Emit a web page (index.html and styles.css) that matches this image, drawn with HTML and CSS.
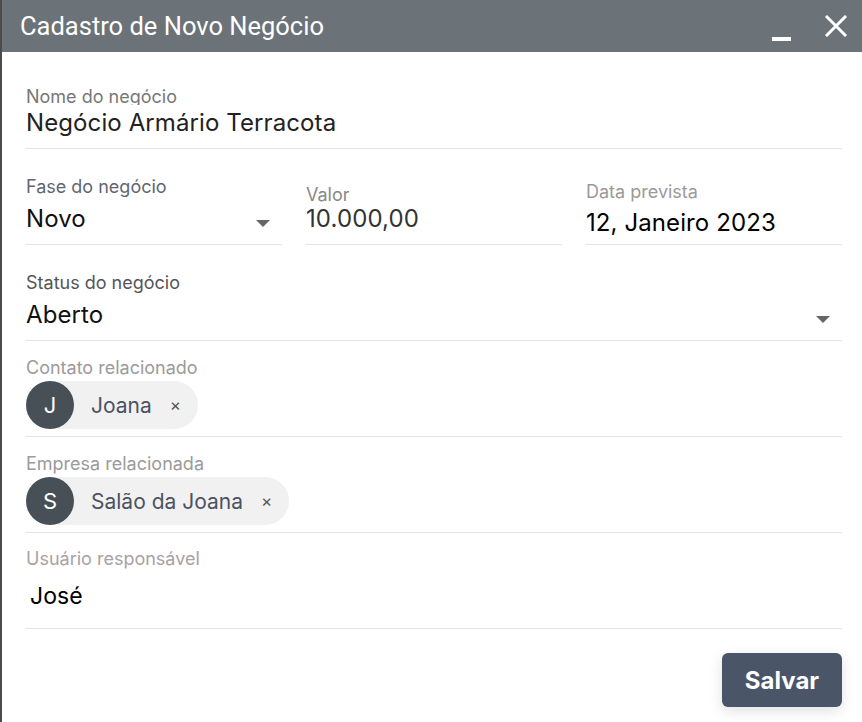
FILE: index.html
```html
<!DOCTYPE html>
<html lang="pt-BR">
<head>
    <meta charset="UTF-8" />
    <meta name="viewport" content="width=device-width, initial-scale=1.0"/>
    <title>Cadastro de Novo Negócio</title>
    <link rel="stylesheet" href="styles.css">
</head>
<body>
    <div class="dialog">
        <div class="dialog-header">
            <h1>Cadastro de Novo Negócio</h1>
            <button class="icon-btn minimize" title="Minimizar"><span class="bar"></span></button>
            <button class="icon-btn close" title="Fechar">
                <svg width="22" height="22" viewBox="0 0 22 22">
                    <path d="M2 2 L20 20 M20 2 L2 20" stroke="#fff" stroke-width="3" stroke-linecap="square" fill="none"/>
                </svg>
            </button>
        </div>

        <form class="dialog-body">
            <div class="field field-name">
                <label>Nome do negócio</label>
                <div class="value">Negócio Armário Terracota</div>
            </div>

            <div class="row">
                <div class="field col field-fase">
                    <label>Fase do negócio</label>
                    <div class="value select">Novo <span class="caret"></span></div>
                </div>
                <div class="field col field-valor">
                    <label>Valor</label>
                    <div class="value">10.000,00</div>
                </div>
                <div class="field col field-data">
                    <label>Data prevista</label>
                    <div class="value">12, Janeiro 2023</div>
                </div>
            </div>

            <div class="field field-status">
                <label>Status do negócio</label>
                <div class="value select">Aberto <span class="caret"></span></div>
            </div>

            <div class="field field-chip">
                <label>Contato relacionado</label>
                <div class="chip">
                    <span class="avatar">J</span>
                    <span class="chip-name">Joana</span>
                    <span class="chip-remove">×</span>
                </div>
            </div>

            <div class="field field-chip">
                <label>Empresa relacionada</label>
                <div class="chip">
                    <span class="avatar">S</span>
                    <span class="chip-name">Salão da Joana</span>
                    <span class="chip-remove">×</span>
                </div>
            </div>

            <div class="field field-user">
                <label>Usuário responsável</label>
                <div class="value">José</div>
            </div>

            <div class="actions">
                <button type="button" class="save-btn">Salvar</button>
            </div>
        </form>
    </div>
</body>
</html>
```

FILE: styles.css
```css
:root {
    --header-bg: #6b7278;
    --line: #e2e2e2;
    --avatar: #475056;
    --chip-bg: #f1f1f1;
    --button-bg: #4a5568;
}

html, body {
    margin: 0;
    height: 100%;
}

body {
    font-family: Inter, "Noto Sans", sans-serif;
    background: #fff;
}

.dialog {
    height: 722px;
    border-left: 2px solid #4b4b4b;
    box-sizing: border-box;
    display: flex;
    flex-direction: column;
}

.dialog-header {
    height: 52px;
    background: var(--header-bg);
    display: flex;
    align-items: center;
    padding: 0 15px 0 18px;
}

.dialog-header h1 {
    flex: 1;
    margin: 0;
    font-family: Roboto, sans-serif;
    font-weight: 400;
    font-size: 25.5px;
    color: #fff;
}

.icon-btn {
    background: none;
    border: none;
    padding: 0;
    cursor: pointer;
    display: flex;
}

.minimize {
    width: 20px;
    height: 22px;
    margin-right: 33px;
    align-items: flex-end;
}

.minimize .bar {
    display: block;
    width: 19px;
    height: 4px;
    background: #fff;
    margin-bottom: -4px;
}

.dialog-body {
    padding: 0 20px 0 24px;
}

.field {
    border-bottom: 1px solid var(--line);
}

.field label {
    display: block;
    font-size: 18px;
    line-height: 20px;
    color: #777;
}

.field .value {
    font-size: 24px;
    line-height: 28px;
    letter-spacing: 0.1px;
    color: #222;
}

.select {
    display: flex;
    align-items: center;
    justify-content: space-between;
}

.caret {
    width: 0;
    height: 0;
    border-left: 7px solid transparent;
    border-right: 7px solid transparent;
    border-top: 7px solid #666;
    margin: 8px 12px 0 0;
}

/* erste Zeile */
.field-name {
    padding: 35px 0 11px;
}

.field-name label {
    height: 18px;
    overflow: hidden;
}

.field-name .value {
    margin-top: 4px;
}

/* drei Spalten */
.row {
    display: flex;
    gap: 24px;
}

.col {
    flex: 1;
}

.field-fase {
    padding: 28px 0 11px;
}

.field-fase label {
    color: #5f6672;
}

.field-fase .value {
    margin-top: 8px;
    color: #111;
}

.field-valor {
    padding: 36px 0 11px;
}

.field-valor label {
    color: #888;
}

.field-valor .value {
    color: #333;
}

.field-data {
    padding: 33px 0 7px;
}

.field-data label {
    color: #9a9a9a;
}

.field-data .value {
    margin-top: 7px;
    color: #000;
}

.field-status {
    padding: 28px 0 11px;
}

.field-status label {
    color: #555;
}

.field-status .value {
    margin-top: 8px;
    color: #111;
}

/* Chips */
.field-chip {
    padding: 17px 0 7px;
}

.field-chip label {
    color: #9c9a9a;
}

.chip {
    display: inline-flex;
    align-items: center;
    height: 48px;
    margin-top: 3px;
    background: var(--chip-bg);
    border-radius: 24px;
    padding-right: 17px;
}

.avatar {
    width: 48px;
    height: 48px;
    border-radius: 50%;
    background: var(--avatar);
    color: #fff;
    font-size: 22px;
    display: flex;
    align-items: center;
    justify-content: center;
}

.chip-name {
    margin-left: 17px;
    font-size: 21px;
    color: #4b5262;
}

.chip-remove {
    margin-left: 18px;
    font-size: 17px;
    color: #555;
}

.field-user {
    padding: 16px 0 18px;
}

.field-user label {
    color: #a8a2a2;
}

.field-user .value {
    margin-top: 13px;
    padding-left: 4px;
    font-size: 23px;
    color: #000;
}

/* Button */
.actions {
    display: flex;
    justify-content: flex-end;
    padding-top: 24px;
}

.save-btn {
    width: 120px;
    height: 54px;
    background: var(--button-bg);
    color: #fff;
    border: none;
    border-radius: 6px;
    font-family: Inter, sans-serif;
    font-weight: 700;
    font-size: 24px;
    box-shadow: 0 4px 14px rgba(0,0,0,0.12);
    cursor: pointer;
}
```
